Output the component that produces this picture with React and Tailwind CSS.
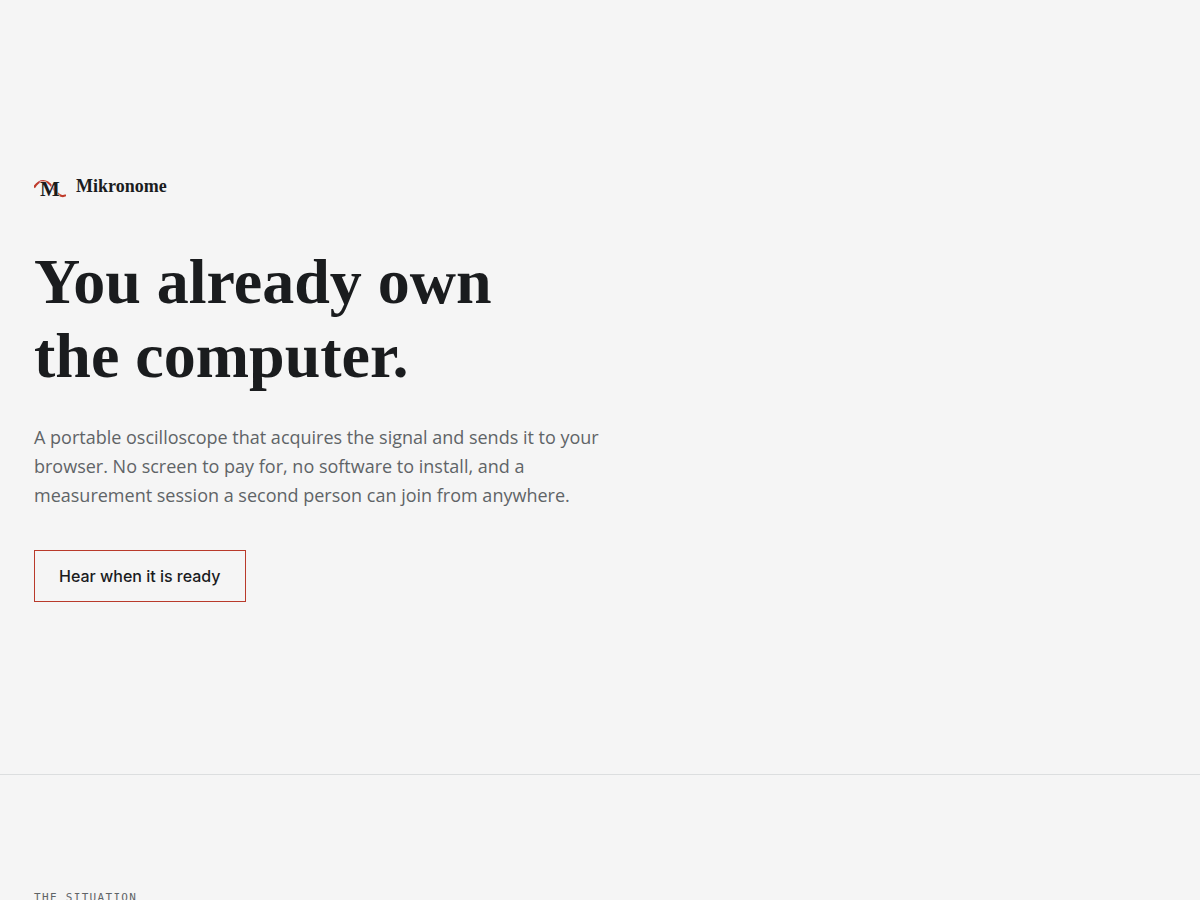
const Logo = () => (
  <svg className="h-8 w-8 shrink-0" viewBox="0 0 32 32" fill="none" aria-hidden="true">
    <path
      d="M0 15.6 C2.6 11.4 5.4 9 9.2 9 C13.2 9 15.8 11.6 18.2 14.8 C21.4 19.4 24.4 23.6 28 24 C29.8 24.2 31 23.8 32 23"
      stroke="#bf3b2b"
      strokeWidth="2.2"
    />
    <text
      x="16"
      y="24"
      textAnchor="middle"
      fontSize="21"
      fontWeight="700"
      fill="#1a1c1e"
      stroke="#f5f5f5"
      strokeWidth="1"
      paintOrder="stroke"
      fontFamily="'Liberation Serif', serif"
    >
      M
    </text>
  </svg>
)

const Hero = () => (
  <header className="box-content flex min-h-[86vh] flex-col justify-center border-b border-[#dcdedf]">
    <div className="flex flex-col px-[34px]">
      <div className="mb-[41px] flex items-center gap-[10px]">
        <Logo />
        <span className="pb-1 font-['Liberation_Serif',serif] text-[18px] leading-6 font-bold">
          Mikronome
        </span>
      </div>

      <h1 className="mb-[30px] font-['Liberation_Serif',serif] text-[64px] leading-[74px] font-bold">
        You already own
        <br />
        the computer.
      </h1>

      <p className="mb-10 max-w-[580px] text-[18px] leading-[29px] text-[#5f6467]">
        A portable oscilloscope that acquires the signal and sends it to your browser. No screen to
        pay for, no software to install, and a measurement session a second person can join from
        anywhere.
      </p>

      <a
        href="#notify"
        className="self-start border border-[#b93a2b] px-6 py-3 font-['Inter',sans-serif] text-[16px] leading-[26px] font-medium"
      >
        Hear when it is ready
      </a>
    </div>
  </header>
)

const Situation = () => (
  <section id="situation" className="px-[34px] pt-[115px] pb-24">
    <h2 className="font-['DejaVu_Sans_Mono',monospace] text-[11px] leading-4 tracking-[0.12em] text-[#5f6467] uppercase">
      The situation
    </h2>
  </section>
)

export default function App() {
  return (
    <main className="min-h-screen bg-[#f5f5f5] font-['Open_Sans',sans-serif] text-[#1a1c1e]">
      <Hero />
      <Situation />
    </main>
  )
}
